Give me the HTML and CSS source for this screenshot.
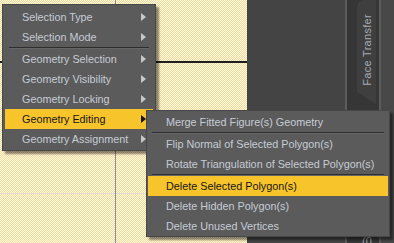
FILE: index.html
```html
<!DOCTYPE html>
<html lang="en">
<head>
  <meta charset="UTF-8">
  <title>Geometry Editing Menu</title>
  <link rel="stylesheet" href="styles.css">
</head>
<body>
  <div class="screen">
    <div class="viewport"></div>
    <div class="stage"></div>
    <div class="dock">
      <div class="dock-fill"></div>
      <div class="dock-edge"></div>
      <div class="dock-track">
        <div class="tab"><span>Face Transfer</span></div>
        <span class="tab-next">(0</span>
      </div>
      <div class="dock-edge"></div>
      <div class="dock-fill wide"></div>
    </div>

    <div class="menu main-menu">
      <div class="item">Selection Type<i class="arrow"></i></div>
      <div class="item">Selection Mode<i class="arrow"></i></div>
      <div class="sep"></div>
      <div class="item">Geometry Selection<i class="arrow"></i></div>
      <div class="item">Geometry Visibility<i class="arrow"></i></div>
      <div class="item">Geometry Locking<i class="arrow"></i></div>
      <div class="item active">Geometry Editing<i class="arrow"></i></div>
      <div class="item">Geometry Assignment<i class="arrow"></i></div>
    </div>

    <div class="menu sub-menu">
      <div class="item">Merge Fitted Figure(s) Geometry</div>
      <div class="sep"></div>
      <div class="item">Flip Normal of Selected Polygon(s)</div>
      <div class="item">Rotate Triangulation of Selected Polygon(s)</div>
      <div class="sep"></div>
      <div class="item active">Delete Selected Polygon(s)</div>
      <div class="item">Delete Hidden Polygon(s)</div>
      <div class="item">Delete Unused Vertices</div>
    </div>
  </div>
</body>
</html>
```

FILE: styles.css
```css
body {
  margin: 0;
  font-family: "Liberation Sans", Arial, sans-serif;
  font-size: 11px;
  background: #444;
}

.screen {
  position: relative;
  display: flex;
  width: 394px;
  height: 243px;
  overflow: hidden;
}

/* canvas with the yellow checker and guide lines */
.viewport {
  width: 247px;
  flex-shrink: 0;
  background-color: #fff9e6;
  background-image:
    linear-gradient(#1e1e1e, #1e1e1e),
    linear-gradient(#8c8c8c, #8c8c8c),
    linear-gradient(#e2ddd0, #e2ddd0),
    conic-gradient(#f5da92 25%, #fffaea 0 50%, #f5da92 0 75%, #fffaea 0);
  background-size: 100% 2px, 1px 100%, 100% 1px, 2px 2px;
  background-position: 0 61px, 115px 0, 0 193px, 0 0;
  background-repeat: no-repeat, no-repeat, no-repeat, repeat;
}

.stage {
  width: 97px;
  background: #444;
}

.dock {
  display: flex;
  flex: 1;
}

.dock-fill {
  width: 1px;
  background: #444;
}

.dock-fill.wide {
  flex: 1;
  background: #484848;
}

.dock-edge {
  width: 2px;
  background: #5d5d5d;
}

.dock-track {
  position: relative;
  width: 32px;
  background: #363636;
}

.tab {
  width: 19px;
  height: 104px;
  margin-left: 10px;
  background: #3f3f3f;
  border-top-left-radius: 7px;
  clip-path: polygon(0 0, 100% 0, 100% 100%, 60% 96%, 0 88%);
  display: flex;
  align-items: center;
  justify-content: center;
}

.tab span {
  writing-mode: vertical-rl;
  transform: rotate(180deg);
  color: #a4aab2;
  font-size: 11px;
  letter-spacing: 0.3px;
  margin-bottom: 4px;
}

.tab-next {
  position: absolute;
  left: 15px;
  top: 235px;
  color: #a4aab2;
}

/* popup menus */
.menu {
  position: absolute;
  box-sizing: border-box;
  background: #5b5b5b;
  border: 1px solid #474747;
  box-shadow: 3px 3px 2px rgba(0, 0, 0, 0.45);
  font-size: 10.8px;
}

.main-menu {
  left: 2px;
  top: 4px;
  width: 154px;
  height: 147px;
  padding: 2px 2px 1px;
}

.sub-menu {
  left: 146px;
  top: 110px;
  width: 244px;
  height: 127px;
  padding: 1px 1px 0;
}

.item {
  display: flex;
  align-items: center;
  height: 20px;
  color: #c6ccd5;
  white-space: nowrap;
}

.main-menu .item {
  padding: 0 7px 0 17px;
}

.sub-menu .item {
  padding-left: 18px;
}

.item.active {
  background: #f8c42c;
  color: #161616;
}

.arrow {
  margin-left: auto;
  width: 0;
  height: 0;
  border-left: 5px solid #c8c8c8;
  border-top: 4px solid transparent;
  border-bottom: 4px solid transparent;
}

.item.active .arrow {
  border-left-color: #161616;
}

.sep {
  height: 0;
  margin: 0 4px;
  border-top: 1px solid #2e2e2e;
  border-bottom: 1px solid #666;
}
```
